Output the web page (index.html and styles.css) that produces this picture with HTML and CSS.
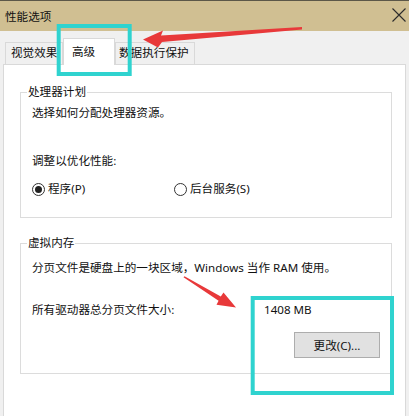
FILE: index.html
```html
<!DOCTYPE html>
<html lang="zh-CN">
<head>
<meta charset="utf-8">
<title>性能选项</title>
<link rel="stylesheet" href="styles.css">
</head>
<body>
<div class="window">
  <div class="titlebar">
    <span class="title">性能选项</span>
    <svg class="close" width="14" height="14" viewBox="0 0 14 14"><path d="M0.5 0.5 L13.5 13.5 M13.5 0.5 L0.5 13.5" stroke="#2b2b2b" stroke-width="1.1" fill="none"/></svg>
  </div>
  <div class="body">
    <div class="tabs">
      <div class="tab t1">视觉效果</div>
      <div class="tab active">高级</div>
      <div class="tab t3">数据执行保护</div>
    </div>
    <div class="panel">
      <fieldset class="group g1">
        <legend>处理器计划</legend>
        <p class="line p1">选择如何分配处理器资源。</p>
        <p class="line p2">调整以优化性能:</p>
        <div class="radios">
          <span class="radio r1"><span class="dot checked"></span>程序(P)</span>
          <span class="radio"><span class="dot"></span>后台服务(S)</span>
        </div>
      </fieldset>
      <fieldset class="group g2">
        <legend>虚拟内存</legend>
        <p class="line q1">分页文件是硬盘上的一块区域，Windows 当作 RAM 使用。</p>
        <div class="line size-row"><span class="size-label">所有驱动器总分页文件大小:</span><span>1408 MB</span></div>
        <div class="btn-row"><button class="btn">更改(C)...</button></div>
      </fieldset>
    </div>
  </div>
  <svg class="annot" width="409" height="416" viewBox="0 0 409 416">
    <rect x="58.7" y="26" width="71" height="48" fill="none" stroke="#2fd3cf" stroke-width="4"/>
    <rect x="252.7" y="298" width="139.3" height="95" fill="none" stroke="#2fd3cf" stroke-width="4"/>
    <polygon points="143,39.5 163,30.5 161,35.5 302,27 302,29.5 162,42 158,47.5" fill="#e8393a"/>
    <polygon points="236,307.5 216.5,304.8 218.6,300.8 183.5,277.3 184.5,276.2 220.8,296.5 223.5,292.5" fill="#e8393a"/>
  </svg>
</div>
</body>
</html>
```
FILE: styles.css
```css
html, body {
  margin: 0;
  padding: 0;
}
body {
  width: 409px;
  height: 416px;
  overflow: hidden;
  font-family: "Noto Sans", "Noto Sans CJK SC", sans-serif;
  font-size: 11.6px;
  color: #111;
  background: #f0f0f0;
}
.window {
  position: relative;
  width: 409px;
  height: 416px;
  overflow: hidden;
}
.titlebar {
  height: 30px;
  border-top: 1px solid #5c5748;
  background: #d0bf92;
  display: flex;
  align-items: center;
  justify-content: space-between;
  padding: 0 3px 0 5px;
}
.title {
  line-height: 18px;
  color: #111;
  margin-top: 1px;
}
.close {
  margin-top: -3px;
}
.body {
  padding: 0 3px;
}
.tabs {
  height: 33px;
  display: flex;
  align-items: flex-end;
  padding-left: 2px;
}
.tab {
  box-sizing: border-box;
  height: 22px;
  border: 1px solid #d9d9d9;
  border-bottom: none;
  background: #f0f0f0;
  line-height: 20px;
  padding: 0 5px;
  white-space: nowrap;
}
.t1 {
  width: 58px;
}
.tab.active {
  width: 52px;
  height: 27px;
  background: #fff;
  margin-bottom: -1px;
  position: relative;
  z-index: 1;
  line-height: 26px;
  padding-left: 8px;
  border-left: 1px solid #d9d9d9;
}
.t3 {
  width: 80px;
  padding-left: 3px;
}
.panel {
  background: #fff;
  border: 1px solid #d9d9d9;
  height: 400px;
  padding: 18px 13px 0 16px;
}
.group {
  margin: 0;
  padding: 0 11px 19px 11px;
  border: 1px solid #dcdcdc;
  min-width: 0;
}
.group legend {
  margin-left: -5px;
  padding: 0 1px;
  line-height: 18px;
  height: 18px;
}
.line {
  margin: 0;
  line-height: 18px;
  height: 18px;
  white-space: nowrap;
}
.p1 {
  margin-top: 3px;
}
.p2 {
  margin-top: 30px;
}
.radios {
  margin-top: 10px;
  display: flex;
  line-height: 18px;
  height: 18px;
}
.radio {
  display: flex;
  align-items: center;
  gap: 3px;
}
.r1 {
  width: 142px;
}
.dot {
  box-sizing: border-box;
  width: 13px;
  height: 13px;
  border: 1px solid #333;
  border-radius: 50%;
  display: flex;
  align-items: center;
  justify-content: center;
}
.dot.checked::after {
  content: "";
  width: 7px;
  height: 7px;
  border-radius: 50%;
  background: #222;
}
.g2 {
  margin-top: 16px;
  padding-bottom: 15px;
}
.q1 {
  margin-top: 7px;
}
.size-row {
  margin-top: 24px;
  display: flex;
}
.size-label {
  width: 232px;
}
.btn-row {
  margin-top: 13px;
  display: flex;
  justify-content: flex-end;
}
.btn {
  box-sizing: border-box;
  width: 86px;
  height: 26px;
  background: #e1e1e1;
  border: 1px solid #adadad;
  font-family: inherit;
  font-size: 11.6px;
  color: #111;
  padding: 0;
}
.annot {
  position: absolute;
  left: 0;
  top: 0;
  pointer-events: none;
}
```
